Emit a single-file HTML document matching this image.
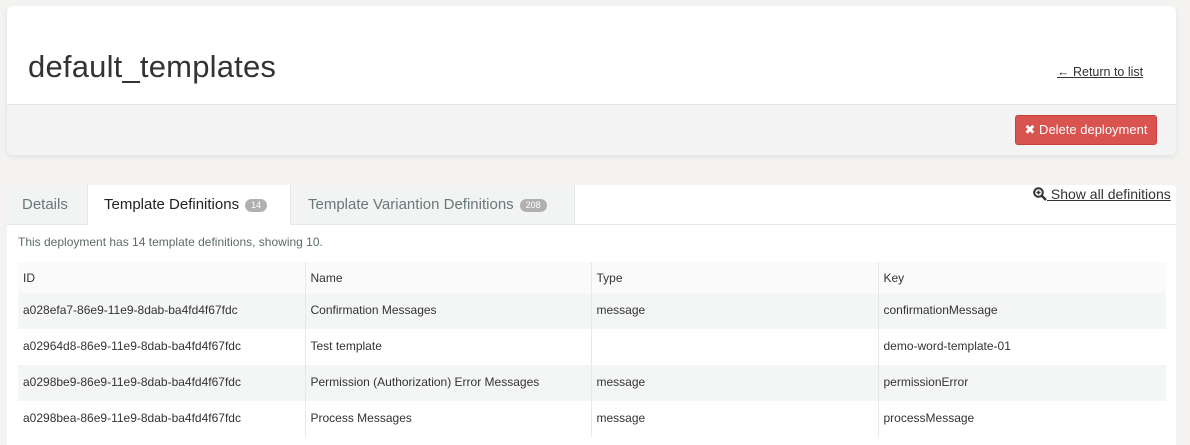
<!DOCTYPE html>
<html><head><style>
*{box-sizing:border-box;margin:0;padding:0}
body{width:1190px;height:435px;overflow:hidden;background:#f4f3f1;font-family:"Liberation Sans",sans-serif;color:#333;position:relative}
.a{position:absolute}
.card1{left:7px;top:6px;width:1169px;height:149px;background:#fff;border-radius:6px;box-shadow:0 2px 6px rgba(0,0,0,.08);overflow:hidden}
.card1 .bot{position:absolute;left:0;top:98px;width:100%;height:51px;background:#f4f4f4;border-top:1px solid #e6e6e6}
h1{position:absolute;left:21px;top:43px;font-size:31px;font-weight:normal;color:#333;letter-spacing:0.2px}
.ret{left:1057px;top:65px;font-size:12.5px;color:#333;text-decoration:underline}
.btn{left:1015px;top:115px;width:142px;height:30px;background:#d9534f;border:1px solid #c9403c;border-radius:3px;color:#fff;font-size:13px;line-height:28px;text-align:center}
.card2{left:7px;top:185px;width:1169px;height:260px;background:#fff;border-radius:4px 4px 0 0}
.tab{top:185px;height:39px;font-size:15px;line-height:39px;color:#6a7878}
.badge{display:inline-block;background:#b0b0b0;color:#fff;font-size:9px;border-radius:8px;padding:0 6px;line-height:13px;vertical-align:middle;margin-left:6px}
.show{left:1033px;top:186px;font-size:14px;color:#333;text-decoration:underline}
.info{left:18px;top:235px;font-size:12px;color:#5e6b6b}
table{position:absolute;left:18px;top:262px;width:1148px;border-collapse:collapse;font-size:12px;color:#333}
td{padding-left:5px;border-left:1px solid #e8e8e8}
td:first-child{border-left:none}
tr.h td{height:31px;background:#fafafa}
tr.r td{height:36px;padding-bottom:2px}
tr.g td{background:#f4f5f5}
</style></head><body>
<div class="a card1"><div class="bot"></div><h1>default_templates</h1></div>
<div class="a ret">← Return to list</div>
<div class="a btn">✖ Delete deployment</div>
<div class="a card2"></div>
<div class="a" style="left:7px;top:224px;width:1169px;height:1px;background:#e8e8e8"></div>
<div class="a tab" style="left:7px;width:81px;background:#f2f4f4;padding-left:15px;border-right:1px solid #e6e6e6">Details</div>
<div class="a tab" style="left:88px;width:202px;background:#fff;color:#222;padding-left:16px;height:40px">Template Definitions<span class="badge">14</span></div>
<div class="a tab" style="left:290px;width:285px;background:#f2f4f4;padding-left:17px;border-left:1px solid #e6e6e6;border-right:1px solid #e6e6e6">Template Variantion Definitions<span class="badge">208</span></div>
<div class="a show"><svg width="14" height="14" viewBox="0 0 14 14" style="vertical-align:-2px"><circle cx="5.5" cy="5.5" r="4.3" fill="none" stroke="#333" stroke-width="2"/><path d="M8.5 8.5L13 13" stroke="#333" stroke-width="2.4"/><path d="M3.5 5.5h4M5.5 3.5v4" stroke="#333" stroke-width="1.4"/></svg> Show all definitions</div>
<div class="a info">This deployment has 14 template definitions, showing 10.</div>
<table>
<colgroup><col style="width:287px"><col style="width:286px"><col style="width:287px"><col></colgroup>
<tr class="h"><td>ID</td><td>Name</td><td>Type</td><td>Key</td></tr>
<tr class="r g"><td>a028efa7-86e9-11e9-8dab-ba4fd4f67fdc</td><td>Confirmation Messages</td><td>message</td><td>confirmationMessage</td></tr>
<tr class="r"><td>a02964d8-86e9-11e9-8dab-ba4fd4f67fdc</td><td>Test template</td><td></td><td>demo-word-template-01</td></tr>
<tr class="r g"><td>a0298be9-86e9-11e9-8dab-ba4fd4f67fdc</td><td>Permission (Authorization) Error Messages</td><td>message</td><td>permissionError</td></tr>
<tr class="r"><td>a0298bea-86e9-11e9-8dab-ba4fd4f67fdc</td><td>Process Messages</td><td>message</td><td>processMessage</td></tr>
</table>
</body></html>
